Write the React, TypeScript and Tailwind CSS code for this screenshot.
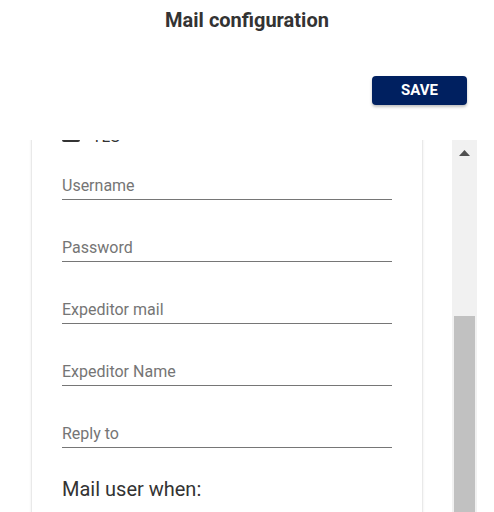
import React from "react";

function Field({ label, first }: { label: string; first?: boolean }) {
  return (
    <div
      className={`${first ? "mt-[34px]" : "mt-[38px]"} border-b border-[#767676] pb-[4px] text-[16px] leading-[19px] text-[#757575]`}
    >
      {label}
    </div>
  );
}

export default function App() {
  return (
    <div
      className="w-[494px] h-[512px] bg-white overflow-hidden flex flex-col"
      style={{ fontFamily: "Roboto, 'Liberation Sans', sans-serif" }}
    >
      <div className="pt-[8px] h-[32px] text-center text-[20px] leading-[24px] font-bold text-[#333333]">
        Mail configuration
      </div>
      <div className="flex justify-end pr-[27px] mt-[44px]">
        <button className="w-[95px] h-[29px] rounded-[4px] bg-[#002060] text-white text-[15px] font-bold leading-[29px] shadow-[0_2px_3px_rgba(0,0,0,0.25)]">
          SAVE
        </button>
      </div>
      <div className="mt-[35px] flex w-[477px] h-[372px]">
        <div className="w-[452px] h-full overflow-hidden">
          <div className="ml-[32px] w-[390px] -mt-[20px] bg-white shadow-[0_1px_3px_rgba(0,0,0,0.18),0_0_1px_rgba(0,0,0,0.12)] px-[30px] pt-[4px] pb-[40px]">
            <div className="flex items-end h-[18px]">
              <div className="w-[18px] h-[18px] border-2 border-[#333333] rounded-[2px]" />
              <span className="ml-[12px] -mb-[2px] text-[16px] leading-[14px] text-[#333333]">TLS</span>
            </div>
            <Field label="Username" first />
            <Field label="Password" />
            <Field label="Expeditor mail" />
            <Field label="Expeditor Name" />
            <Field label="Reply to" />
            <div className="mt-[29px] text-[20px] leading-[24px] text-[#333333]">
              Mail user when:
            </div>
            <div className="h-[200px]" />
          </div>
        </div>
        <div className="w-[25px] h-full bg-[#f1f1f1] flex flex-col items-center">
          <div className="h-[176px] w-full flex justify-center pt-[10px]">
            <svg width="11" height="6" viewBox="0 0 11 6">
              <polygon points="5.5,0 11,6 0,6" fill="#505050" />
            </svg>
          </div>
          <div className="w-[21px] flex-1 bg-[#c1c1c1]" />
        </div>
      </div>
    </div>
  );
}
